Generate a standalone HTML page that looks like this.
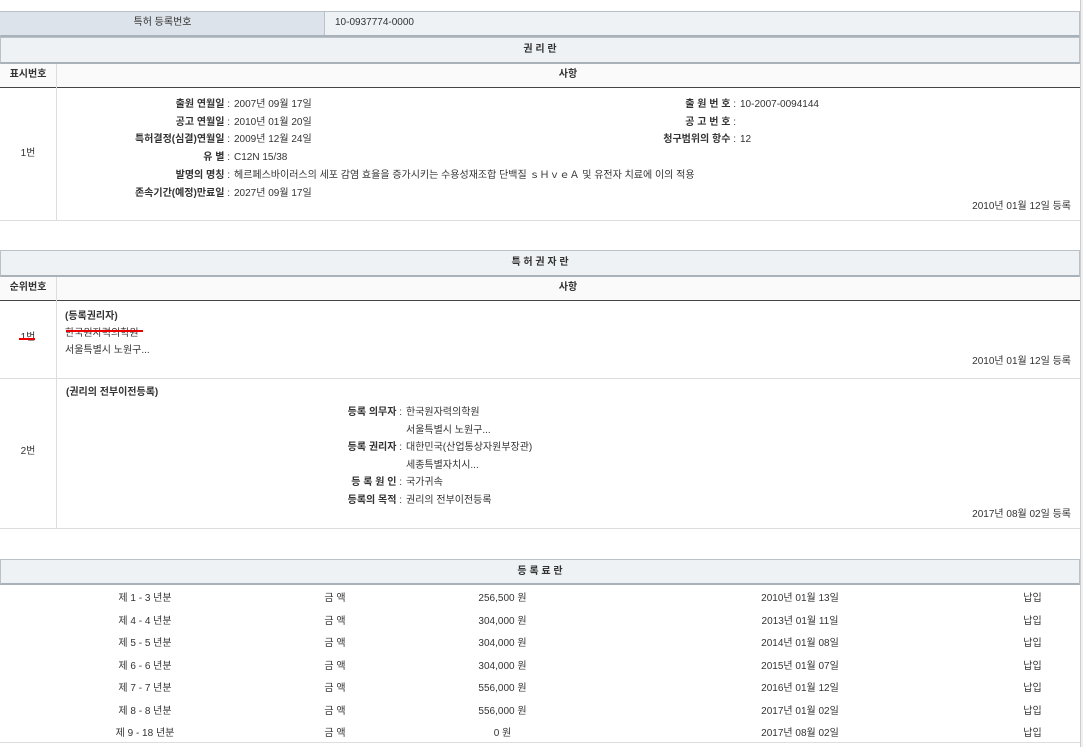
<!DOCTYPE html>
<html><head><meta charset="utf-8"><style>
*{margin:0;padding:0;box-sizing:border-box}
body{width:1083px;height:747px;background:#fff;position:relative;overflow:hidden;font-family:"Liberation Sans","Noto Sans CJK KR",sans-serif;font-size:10px;color:#333}
.a{position:absolute;white-space:nowrap;line-height:12px}
.b{position:absolute}
.r{text-align:right}
.c{text-align:center}
.hd{position:absolute;left:0;width:1080px;background:#eef2f5;border:1px solid #b9c1c9;border-bottom:2px solid #a9b1b9}
.ch{position:absolute;left:0;width:1080px;background:#fafafa;border-bottom:1px solid #444}
.hl{position:absolute;left:0;width:1080px;height:1px;background:#ddd}
.vl{position:absolute;width:1px;background:#ddd}
b{font-weight:bold}
</style></head><body>
<div class="b" style="left:1080px;top:0;width:3px;height:747px;background:#f0f0f0;border-left:1px solid #ccc"></div>

<!-- row 1 -->
<div class="b" style="left:0;top:11px;width:1080px;height:26px;border:1px solid #b9c1c9;border-bottom:2px solid #a9b1b9;background:#eef2f5"></div>
<div class="b" style="left:0;top:12px;width:325px;height:23px;background:#dce3ea;border-right:1px solid #b9c1c9"></div>
<div class="a c" style="left:0;top:17px;width:325px">특허 등록번호</div>
<div class="a" style="left:335px;top:17px">10-0937774-0000</div>

<!-- section 1 -->
<div class="hd" style="top:37px;height:27px"></div>
<div class="a c" style="left:0;top:44px;width:1080px"><b>권 리 란</b></div>
<div class="ch" style="top:64px;height:24px"></div>
<div class="vl" style="left:56px;top:64px;height:156px"></div>
<div class="a c" style="left:0;top:69px;width:56px"><b>표시번호</b></div>
<div class="a c" style="left:56px;top:69px;width:1024px"><b>사항</b></div>
<div class="a c" style="left:0;top:148px;width:56px">1번</div>
<div class="a r" style="left:0;top:96px;width:230px;line-height:17.7px"><b>출원 연월일</b> :<br><b>공고 연월일</b> :<br><b>특허결정(심결)연월일</b> :<br><b>유 별</b> :<br><b>발명의 명칭</b> :<br><b>존속기간(예정)만료일</b> :</div>
<div class="a" style="left:234px;top:96px;line-height:17.7px">2007년 09월 17일<br>2010년 01월 20일<br>2009년 12월 24일<br>C12N 15/38<br>헤르페스바이러스의 세포 감염 효율을 증가시키는 수용성재조합 단백질 ｓＨｖｅＡ 및 유전자 치료에 이의 적용<br>2027년 09월 17일</div>
<div class="a r" style="left:0;top:96px;width:736px;line-height:17.7px"><b>출 원 번 호</b> :<br><b>공 고 번 호</b> :<br><b>청구범위의 항수</b> :</div>
<div class="a" style="left:740px;top:96px;line-height:17.7px">10-2007-0094144<br><br>12</div>
<div class="a r" style="left:0;top:201px;width:1071px">2010년 01월 12일 등록</div>
<div class="hl" style="top:220px"></div>

<!-- section 2 -->
<div class="hd" style="top:250px;height:27px"></div>
<div class="a c" style="left:0;top:257px;width:1080px"><b>특 허 권 자 란</b></div>
<div class="ch" style="top:277px;height:24px"></div>
<div class="vl" style="left:56px;top:277px;height:251px"></div>
<div class="a c" style="left:0;top:282px;width:56px"><b>순위번호</b></div>
<div class="a c" style="left:56px;top:282px;width:1024px"><b>사항</b></div>
<div class="a c" style="left:0;top:332px;width:56px">1번</div>
<div class="b" style="left:19px;top:338px;width:16px;height:2px;background:#e00"></div>
<div class="a" style="left:65px;top:308px;line-height:17px"><b>(등록권리자)</b><br>한국원자력의학원<br>서울특별시 노원구...</div>
<div class="b" style="left:66px;top:330px;width:77px;height:2px;background:#e00"></div>
<div class="a r" style="left:0;top:356px;width:1071px">2010년 01월 12일 등록</div>
<div class="hl" style="top:378px"></div>
<div class="a" style="left:66px;top:387px"><b>(권리의 전부이전등록)</b></div>
<div class="a c" style="left:0;top:446px;width:56px">2번</div>
<div class="a r" style="left:0;top:404px;width:402px;line-height:17.5px"><b>등록 의무자</b> :<br><br><b>등록 권리자</b> :<br><br><b>등 록 원 인</b> :<br><b>등록의 목적</b> :</div>
<div class="a" style="left:406px;top:404px;line-height:17.5px">한국원자력의학원<br>서울특별시 노원구...<br>대한민국(산업통상자원부장관)<br>세종특별자치시...<br>국가귀속<br>권리의 전부이전등록</div>
<div class="a r" style="left:0;top:509px;width:1071px">2017년 08월 02일 등록</div>
<div class="hl" style="top:528px"></div>

<!-- section 3 -->
<div class="hd" style="top:559px;height:26px"></div>
<div class="a c" style="left:0;top:566px;width:1080px"><b>등 록 료 란</b></div>
<div class="a c" style="left:60px;top:588px;width:170px;line-height:22.5px">제 1 - 3 년분<br>제 4 - 4 년분<br>제 5 - 5 년분<br>제 6 - 6 년분<br>제 7 - 7 년분<br>제 8 - 8 년분<br>제 9 - 18 년분</div>
<div class="a c" style="left:300px;top:588px;width:70px;line-height:22.5px">금 액<br>금 액<br>금 액<br>금 액<br>금 액<br>금 액<br>금 액</div>
<div class="a c" style="left:440px;top:588px;width:125px;line-height:22.5px">256,500 원<br>304,000 원<br>304,000 원<br>304,000 원<br>556,000 원<br>556,000 원<br>0 원</div>
<div class="a c" style="left:730px;top:588px;width:140px;line-height:22.5px">2010년 01월 13일<br>2013년 01월 11일<br>2014년 01월 08일<br>2015년 01월 07일<br>2016년 01월 12일<br>2017년 01월 02일<br>2017년 08월 02일</div>
<div class="a c" style="left:1005px;top:588px;width:55px;line-height:22.5px">납입<br>납입<br>납입<br>납입<br>납입<br>납입<br>납입</div>
<div class="hl" style="top:742px"></div>
</body></html>
